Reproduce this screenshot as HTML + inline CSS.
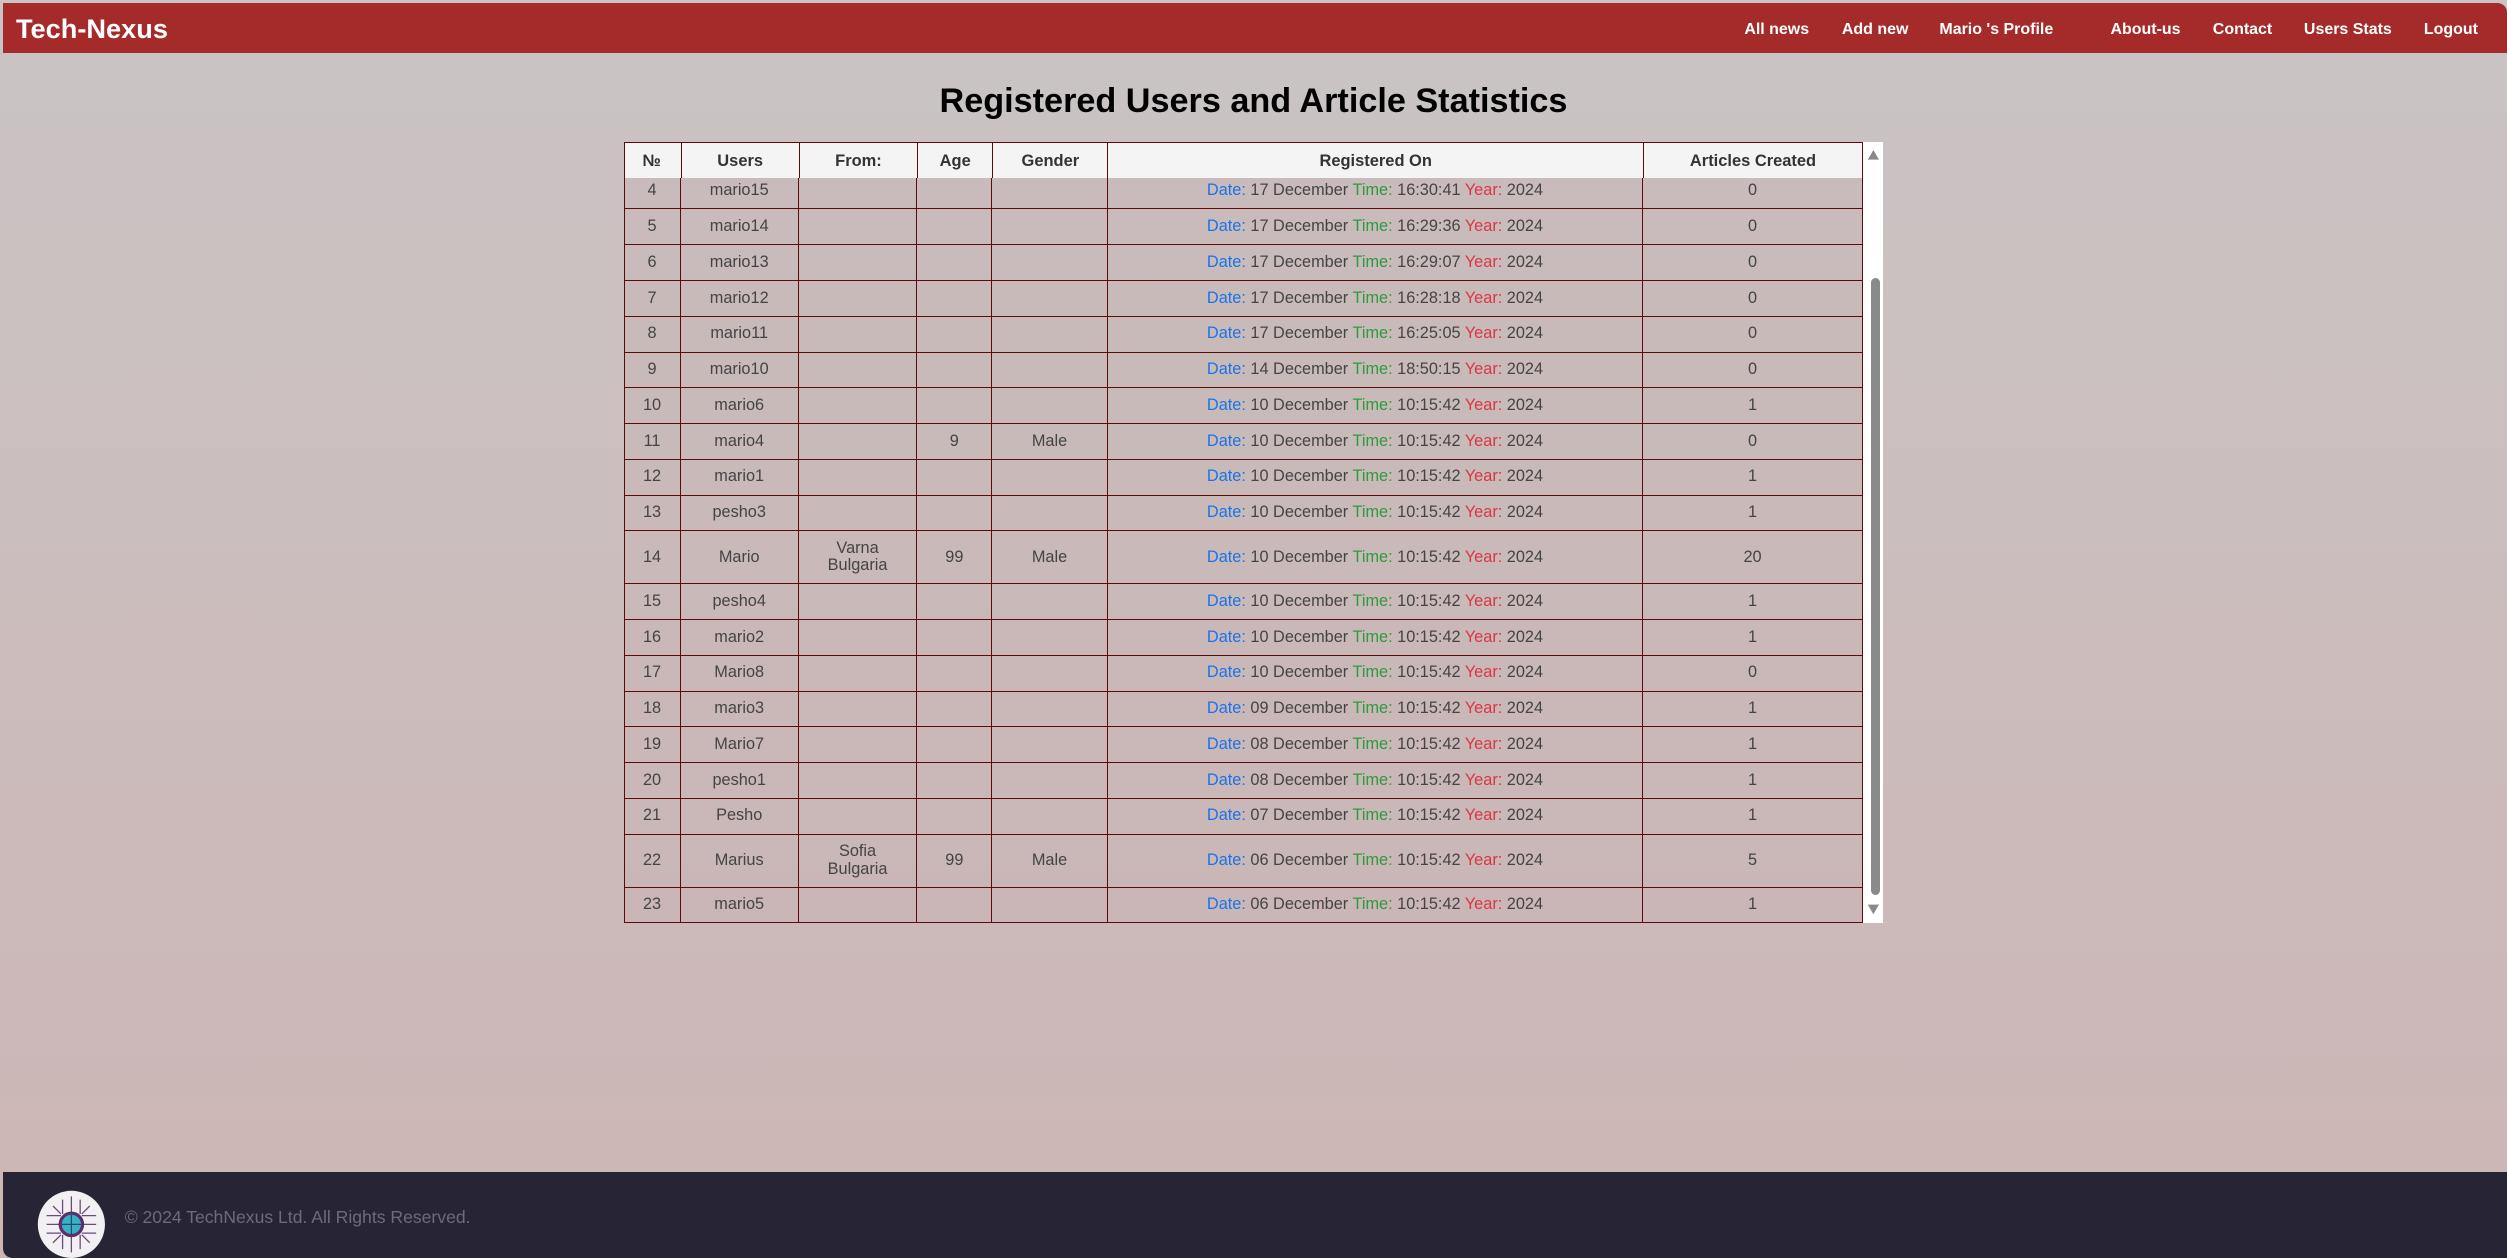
<!DOCTYPE html>
<html><head><meta charset="utf-8">
<style>
html,body{margin:0;padding:0;overflow:hidden;}
body{width:2507px;height:1259px;background:#fff;}
#p{zoom:1.59885;width:1568px;height:787px;position:relative;font-family:"Liberation Sans",Arial,sans-serif;
background:linear-gradient(#cac4c4 0%,#cdb5b5 100%);overflow:hidden;}
#hd{position:absolute;left:2px;top:2px;width:1566px;height:31px;background:#a52a2a;border-top-right-radius:6px;}
#hd .logo{position:absolute;left:8px;top:6px;color:#fff;font-weight:bold;font-size:17px;}
#hd a{position:absolute;top:11px;color:#fff;font-weight:bold;font-size:10px;text-decoration:none;white-space:nowrap;}
h1{position:absolute;left:0;width:1568px;top:51px;margin:0;text-align:center;font-size:21.4px;font-weight:bold;color:#000;}
#tw{position:absolute;left:390px;top:89px;width:775px;height:488px;}
#hrow{position:absolute;left:0;top:0;height:22px;width:774px;background:#f4f4f4;border:1px solid #5e0a0a;border-bottom:none;z-index:2}
#hrow div{position:absolute;top:0;height:22px;line-height:23px;text-align:center;font-size:10.3px;font-weight:bold;color:#333;border-left:1px solid #5e0a0a;box-sizing:border-box}
#body{position:absolute;left:0;top:22px;width:776px;height:466px;overflow:hidden;}
table{border-collapse:collapse;position:absolute;top:-3px;left:0;width:775px;table-layout:fixed;}
td{border:1px solid #5e0a0a;background:rgba(200,180,180,0.45);text-align:center;font-size:10.2px;color:#444;padding:0;height:21.75px;line-height:11px}
tr.t td{height:32.5px}
.d{color:#1a73e8}.tm{color:#2e9a3e}.y{color:#dc3545}
#sb{position:absolute;left:1165px;top:89px;width:13px;height:488px;background:#fff;}
#th{position:absolute;left:1170px;top:174px;width:6px;height:386px;background:#8a8a8a;border-radius:3px;}
#ft{position:absolute;left:2px;top:733px;width:1566px;height:54px;background:#272535;border-bottom-left-radius:6px}
#ft .t{position:absolute;left:76px;top:22px;color:#6e6a7a;font-size:11px;}
</style></head><body><div id="p">
<div id="hd"><span class="logo">Tech-Nexus</span>
<a style="left:1089px">All news</a><a style="left:1150px">Add new</a><a style="left:1211px">Mario 's Profile</a>
<a style="left:1318px">About-us</a><a style="left:1382px">Contact</a><a style="left:1439px">Users Stats</a><a style="left:1514px">Logout</a></div>
<h1>Registered Users and Article Statistics</h1>
<div id="tw">
<div id="hrow">
<div style="left:-1px;width:36px;border-left:none">№</div>
<div style="left:35px;width:74px">Users</div>
<div style="left:109px;width:74px">From:</div>
<div style="left:183px;width:47px">Age</div>
<div style="left:230px;width:72px">Gender</div>
<div style="left:302px;width:335px">Registered On</div>
<div style="left:637px;width:137px">Articles Created</div>
</div>
<div id="body"><table>
<colgroup><col style="width:35px"><col style="width:74px"><col style="width:74px"><col style="width:47px"><col style="width:72px"><col style="width:335px"><col style="width:137px"></colgroup>
<tr><td>4</td><td>mario15</td><td></td><td></td><td></td><td><span class="d">Date:</span> 17 December <span class="tm">Time:</span> 16:30:41 <span class="y">Year:</span> 2024</td><td>0</td></tr>
<tr><td>5</td><td>mario14</td><td></td><td></td><td></td><td><span class="d">Date:</span> 17 December <span class="tm">Time:</span> 16:29:36 <span class="y">Year:</span> 2024</td><td>0</td></tr>
<tr><td>6</td><td>mario13</td><td></td><td></td><td></td><td><span class="d">Date:</span> 17 December <span class="tm">Time:</span> 16:29:07 <span class="y">Year:</span> 2024</td><td>0</td></tr>
<tr><td>7</td><td>mario12</td><td></td><td></td><td></td><td><span class="d">Date:</span> 17 December <span class="tm">Time:</span> 16:28:18 <span class="y">Year:</span> 2024</td><td>0</td></tr>
<tr><td>8</td><td>mario11</td><td></td><td></td><td></td><td><span class="d">Date:</span> 17 December <span class="tm">Time:</span> 16:25:05 <span class="y">Year:</span> 2024</td><td>0</td></tr>
<tr><td>9</td><td>mario10</td><td></td><td></td><td></td><td><span class="d">Date:</span> 14 December <span class="tm">Time:</span> 18:50:15 <span class="y">Year:</span> 2024</td><td>0</td></tr>
<tr><td>10</td><td>mario6</td><td></td><td></td><td></td><td><span class="d">Date:</span> 10 December <span class="tm">Time:</span> 10:15:42 <span class="y">Year:</span> 2024</td><td>1</td></tr>
<tr><td>11</td><td>mario4</td><td></td><td>9</td><td>Male</td><td><span class="d">Date:</span> 10 December <span class="tm">Time:</span> 10:15:42 <span class="y">Year:</span> 2024</td><td>0</td></tr>
<tr><td>12</td><td>mario1</td><td></td><td></td><td></td><td><span class="d">Date:</span> 10 December <span class="tm">Time:</span> 10:15:42 <span class="y">Year:</span> 2024</td><td>1</td></tr>
<tr><td>13</td><td>pesho3</td><td></td><td></td><td></td><td><span class="d">Date:</span> 10 December <span class="tm">Time:</span> 10:15:42 <span class="y">Year:</span> 2024</td><td>1</td></tr>
<tr class="t"><td>14</td><td>Mario</td><td>Varna<br>Bulgaria</td><td>99</td><td>Male</td><td><span class="d">Date:</span> 10 December <span class="tm">Time:</span> 10:15:42 <span class="y">Year:</span> 2024</td><td>20</td></tr>
<tr><td>15</td><td>pesho4</td><td></td><td></td><td></td><td><span class="d">Date:</span> 10 December <span class="tm">Time:</span> 10:15:42 <span class="y">Year:</span> 2024</td><td>1</td></tr>
<tr><td>16</td><td>mario2</td><td></td><td></td><td></td><td><span class="d">Date:</span> 10 December <span class="tm">Time:</span> 10:15:42 <span class="y">Year:</span> 2024</td><td>1</td></tr>
<tr><td>17</td><td>Mario8</td><td></td><td></td><td></td><td><span class="d">Date:</span> 10 December <span class="tm">Time:</span> 10:15:42 <span class="y">Year:</span> 2024</td><td>0</td></tr>
<tr><td>18</td><td>mario3</td><td></td><td></td><td></td><td><span class="d">Date:</span> 09 December <span class="tm">Time:</span> 10:15:42 <span class="y">Year:</span> 2024</td><td>1</td></tr>
<tr><td>19</td><td>Mario7</td><td></td><td></td><td></td><td><span class="d">Date:</span> 08 December <span class="tm">Time:</span> 10:15:42 <span class="y">Year:</span> 2024</td><td>1</td></tr>
<tr><td>20</td><td>pesho1</td><td></td><td></td><td></td><td><span class="d">Date:</span> 08 December <span class="tm">Time:</span> 10:15:42 <span class="y">Year:</span> 2024</td><td>1</td></tr>
<tr><td>21</td><td>Pesho</td><td></td><td></td><td></td><td><span class="d">Date:</span> 07 December <span class="tm">Time:</span> 10:15:42 <span class="y">Year:</span> 2024</td><td>1</td></tr>
<tr class="t"><td>22</td><td>Marius</td><td>Sofia<br>Bulgaria</td><td>99</td><td>Male</td><td><span class="d">Date:</span> 06 December <span class="tm">Time:</span> 10:15:42 <span class="y">Year:</span> 2024</td><td>5</td></tr>
<tr><td>23</td><td>mario5</td><td></td><td></td><td></td><td><span class="d">Date:</span> 06 December <span class="tm">Time:</span> 10:15:42 <span class="y">Year:</span> 2024</td><td>1</td></tr>
</table></div></div>
<div id="sb"><svg width="13" height="488" style="position:absolute;left:0;top:0"><path d="M3 11 L6.5 5 L10 11Z" fill="#8a8a8a"/><path d="M3 477 L6.5 483 L10 477Z" fill="#8a8a8a"/></svg></div>
<div id="th"></div>
<div id="ft">
<svg style="position:absolute;left:21px;top:11px" width="43" height="43" viewBox="0 0 43 43">
<circle cx="21.5" cy="21.5" r="21" fill="#f2f0f2"/>
<g stroke="#6a4a7a" stroke-width="0.8" fill="none">
<path d="M21.5 4V14M16 6V15M27 6V15M6 21.5H14M6 16H15M6 27H15M37 21.5H29M37 16H28M37 27H28M21.5 39V29M16 37V28M27 37V28M10 10L15 15M33 10L28 15M10 33L15 28M33 33L28 28"/></g>
<circle cx="21.5" cy="21.5" r="8" fill="#5a2f6a"/>
<circle cx="21.5" cy="21.5" r="6" fill="#3ab0c8"/>
<path d="M15.5 21.5H27.5M21.5 15.5V27.5" stroke="#1d4f6a" stroke-width="0.8"/>
</svg>
<span class="t">© 2024 TechNexus Ltd. All Rights Reserved.</span></div>
</div></body></html>
